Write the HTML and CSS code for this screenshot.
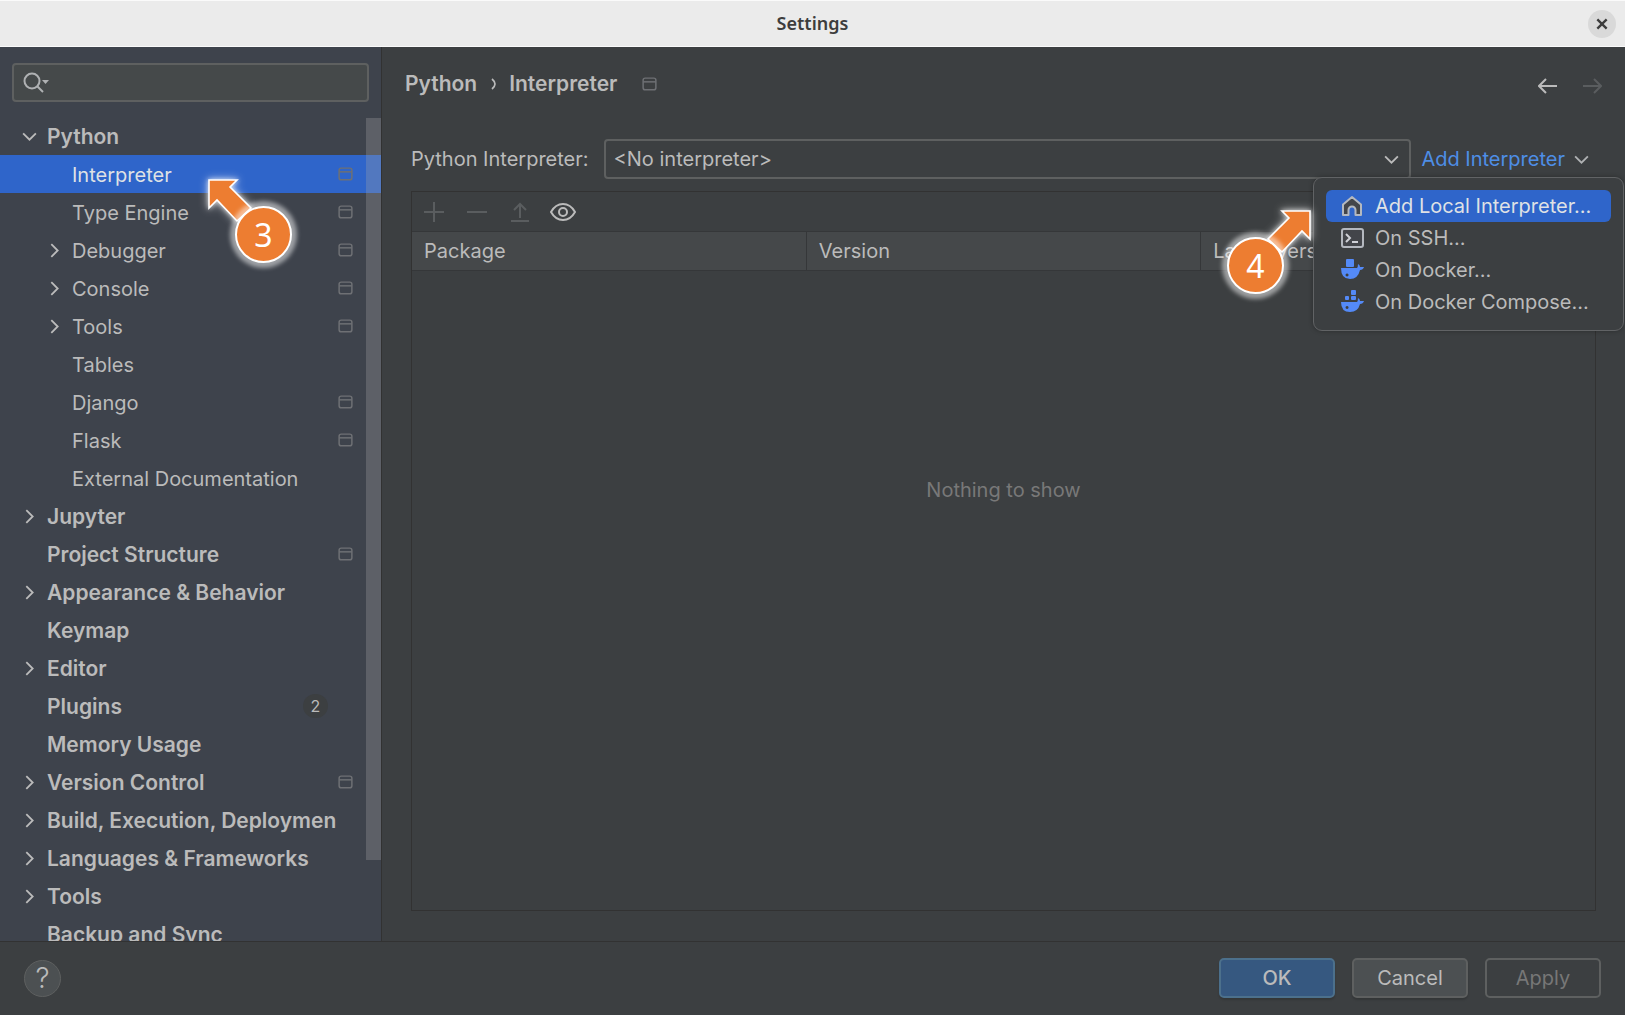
FILE: index.html
```
<!DOCTYPE html>
<html lang="en">
  <head>
    <meta charset="UTF-8" />
    <meta name="viewport" content="width=device-width, initial-scale=1.0" />
    <title>Settings</title>
    <link rel="stylesheet" href="styles.css">
  </head>
  <body>
    <svg class="sprite" aria-hidden="true">
      <symbol id="chevron-right" viewBox="0 0 16 16"><path d="M5 2l6 6-6 6" fill="none" stroke="currentColor" stroke-width="1.7" /></symbol>
      <symbol id="chevron-down" viewBox="0 0 16 16"><path d="M2 5l6 6 6-6" fill="none" stroke="currentColor" stroke-width="1.7" /></symbol>
      <symbol id="project" viewBox="0 0 16 16">
        <rect x="2" y="2" width="12" height="11" rx="2" fill="none" stroke="currentColor" stroke-width="1.4" />
        <path d="M2 5.5h12" stroke="currentColor" stroke-width="1.4" />
      </symbol>
      <symbol id="arrow-callout" viewBox="0 0 48 48"><path d="M3 3h28l-7 7 21 21-14 13-20-21-8 8z" fill="#ed7d31" stroke="#fff" stroke-width="1.6" /></symbol>
    </svg>

    <header class="titlebar">
      <h1>Settings</h1>
      <button class="close" type="button" aria-label="Close">
        <svg viewBox="0 0 12 12" width="14" height="14"><path d="M2 2l8 8M10 2l-8 8" stroke="#3d3d3d" stroke-width="2" /></svg>
      </button>
    </header>

    <div class="content">
      <aside class="sidebar">
        <div class="search">
          <svg viewBox="0 0 28 22" width="28" height="22">
            <circle cx="9" cy="9" r="7.5" fill="none" stroke="#afb1b3" stroke-width="2" />
            <path d="M14 14l6 6" stroke="#afb1b3" stroke-width="2" />
            <path d="M19 8h7l-3.500 4z" fill="#afb1b3" />
          </svg>
          <input type="text" aria-label="Search settings" />
        </div>
        <nav class="tree-wrap">
          <ul class="tree">
            <li class="group"><svg class="toggle"><use href="#chevron-down" /></svg><a href="#">Python</a></li>
            <li class="child selected"><a href="#">Interpreter</a><svg class="mark"><use href="#project" /></svg></li>
            <li class="child"><a href="#">Type Engine</a><svg class="mark"><use href="#project" /></svg></li>
            <li class="child"><svg class="toggle"><use href="#chevron-right" /></svg><a href="#">Debugger</a><svg class="mark"><use href="#project" /></svg></li>
            <li class="child"><svg class="toggle"><use href="#chevron-right" /></svg><a href="#">Console</a><svg class="mark"><use href="#project" /></svg></li>
            <li class="child"><svg class="toggle"><use href="#chevron-right" /></svg><a href="#">Tools</a><svg class="mark"><use href="#project" /></svg></li>
            <li class="child"><a href="#">Tables</a></li>
            <li class="child"><a href="#">Django</a><svg class="mark"><use href="#project" /></svg></li>
            <li class="child"><a href="#">Flask</a><svg class="mark"><use href="#project" /></svg></li>
            <li class="child"><a href="#">External Documentation</a></li>
            <li class="group"><svg class="toggle"><use href="#chevron-right" /></svg><a href="#">Jupyter</a></li>
            <li class="group"><a href="#">Project Structure</a><svg class="mark"><use href="#project" /></svg></li>
            <li class="group"><svg class="toggle"><use href="#chevron-right" /></svg><a href="#">Appearance &amp; Behavior</a></li>
            <li class="group"><a href="#">Keymap</a></li>
            <li class="group"><svg class="toggle"><use href="#chevron-right" /></svg><a href="#">Editor</a></li>
            <li class="group"><a href="#">Plugins</a><span class="count">2</span></li>
            <li class="group"><a href="#">Memory Usage</a></li>
            <li class="group"><svg class="toggle"><use href="#chevron-right" /></svg><a href="#">Version Control</a><svg class="mark"><use href="#project" /></svg></li>
            <li class="group"><svg class="toggle"><use href="#chevron-right" /></svg><a href="#">Build, Execution, Deploymen</a></li>
            <li class="group"><svg class="toggle"><use href="#chevron-right" /></svg><a href="#">Languages &amp; Frameworks</a></li>
            <li class="group"><svg class="toggle"><use href="#chevron-right" /></svg><a href="#">Tools</a></li>
            <li class="group"><a href="#">Backup and Sync</a></li>
          </ul>
          <div class="scrollbar"></div>
          <div class="callout callout-3">
            <svg class="arrow" width="48" height="48"><use href="#arrow-callout" /></svg>
            <span>3</span>
          </div>
        </nav>
      </aside>

      <main class="page">
        <div class="page-head">
          <h2>Python</h2>
          <svg class="crumb" viewBox="0 0 6 12"><path d="M1 1q6 5 0 10" fill="none" stroke="currentColor" stroke-width="1.7" /></svg>
          <h2>Interpreter</h2>
          <svg class="mark"><use href="#project" /></svg>
          <div class="history">
            <button type="button" aria-label="Back"><svg viewBox="0 0 20 16" width="20" height="16"><path d="M19 8H2M8 1L1 8l7 7" fill="none" stroke="currentColor" stroke-width="2" /></svg></button>
            <button type="button" aria-label="Forward" disabled><svg viewBox="0 0 20 16" width="20" height="16"><path d="M1 8h17M12 1l7 7-7 7" fill="none" stroke="currentColor" stroke-width="2" /></svg></button>
          </div>
        </div>

        <div class="interpreter-row">
          <label for="interpreter">Python Interpreter:</label>
          <div class="select">
            <select id="interpreter"><option>&lt;No interpreter&gt;</option></select>
            <svg><use href="#chevron-down" /></svg>
          </div>
          <div class="add">
            <button class="add-button" type="button">Add Interpreter <svg><use href="#chevron-down" /></svg></button>
            <div class="menu">
              <button class="active" type="button">
                <svg viewBox="0 0 24 24"><path d="M3 10.500l9-7.500 9 7.500V21h-5.500v-5a3.500 3.500 0 0 0-7 0v5H3z" fill="#43454a" stroke="#b4b8bf" stroke-width="2" stroke-linejoin="round" /></svg>
                Add Local Interpreter...
              </button>
              <button type="button">
                <svg viewBox="0 0 24 24"><rect x="2" y="3" width="21" height="18" rx="2" fill="#43454a" stroke="#b4b8bf" stroke-width="2" /><path d="M6 8l4 4-4 4M12 16h6" fill="none" stroke="#ced0d6" stroke-width="2" /></svg>
                On SSH...
              </button>
              <button type="button">
                <svg viewBox="0 0 24 24" fill="#548af7"><rect x="6" y="1" width="8" height="8" rx="1" /><path fill-rule="evenodd" d="M1 10h16q1-1 1-4 2 1 2 3h4q-1 3-4 3-2 9-10 9-9 0-9-11zM7 15.500a1.500 1.500 0 1 0 .1 0z" /></svg>
                On Docker...
              </button>
              <button type="button">
                <svg viewBox="0 0 24 24" fill="#548af7"><rect x="11" y="0" width="5" height="5" rx="1" /><rect x="5" y="6" width="4" height="4" rx="1" /><rect x="11" y="6" width="5" height="4" rx="1" /><path fill-rule="evenodd" d="M1 12h16q1-1 1-4 2 1 2 3h4q-1 3-4 3-2 8-10 8-9 0-9-10zM7 16a1.500 1.500 0 1 0 .1 0z" /></svg>
                On Docker Compose...
              </button>
              <div class="callout callout-4">
                <svg class="arrow" width="48" height="48"><use href="#arrow-callout" /></svg>
                <span>4</span>
              </div>
            </div>
          </div>
        </div>

        <section class="packages">
          <div class="toolbar">
            <button type="button" aria-label="Install" disabled><svg viewBox="0 0 26 26"><path d="M13 3v20M3 13h20" stroke="currentColor" stroke-width="2" /></svg></button>
            <button type="button" aria-label="Uninstall" disabled><svg viewBox="0 0 26 26"><path d="M3 13h20" stroke="currentColor" stroke-width="2" /></svg></button>
            <button type="button" aria-label="Upgrade" disabled><svg viewBox="0 0 26 26"><path d="M13 19V5M7 11l6-6 6 6M4 22h18" fill="none" stroke="currentColor" stroke-width="2" /></svg></button>
            <button type="button" aria-label="Show early releases"><svg viewBox="0 0 26 26"><path d="M1 13q4.500-8 12-8t12 8q-4.500 8-12 8T1 13z" fill="none" stroke="currentColor" stroke-width="2" /><circle cx="13" cy="13" r="4" fill="none" stroke="currentColor" stroke-width="2" /></svg></button>
          </div>
          <table>
            <thead>
              <tr>
                <th>Package</th>
                <th>Version</th>
                <th>Latest version</th>
              </tr>
            </thead>
            <tbody>
              <tr>
                <td colspan="3">Nothing to show</td>
              </tr>
            </tbody>
          </table>
        </section>
      </main>
    </div>

    <footer class="footer">
      <button class="help" type="button" aria-label="Help">?</button>
      <button class="btn primary" type="button">OK</button>
      <button class="btn" type="button">Cancel</button>
      <button class="btn" type="button" disabled>Apply</button>
    </footer>
  </body>
</html>
```

FILE: styles.css
```
* {
  box-sizing: border-box;
}

body {
  margin: 0;
  height: 100vh;
  display: flex;
  flex-direction: column;
  overflow: hidden;
  background-color: #3c3f41;
  color: #bbbbbb;
  font-family: Inter, sans-serif;
  font-size: 20px;
  line-height: 28px;
}

button,
input,
select {
  font: inherit;
  color: inherit;
}

button {
  padding: 0;
  border: none;
  background: none;
}

a {
  color: inherit;
  text-decoration: none;
}

.sprite {
  display: none;
}

/* title bar */
.titlebar {
  display: grid;
  grid-template-columns: 1fr auto 1fr;
  align-items: center;
  flex: none;
  height: 47px;
  padding: 0 9px;
  background-color: #ebebeb;
  border-top: 1px solid #fafafa;
  border-bottom: 1px solid #fafafa;
}

.titlebar h1 {
  grid-column: 2;
  margin: 0;
  padding-bottom: 2px;
  font-family: "Noto Sans", sans-serif;
  font-size: 18px;
  font-weight: 600;
  color: #3d3d3d;
}

.close {
  display: flex;
  align-items: center;
  justify-content: center;
  justify-self: end;
  width: 28px;
  height: 28px;
  border-radius: 50%;
  background-color: #d9d9d9;
}

.content {
  display: flex;
  flex: 1;
  min-height: 0;
}

/* sidebar */
.sidebar {
  display: flex;
  flex-direction: column;
  flex: none;
  width: 382px;
  padding-top: 16px;
  background-color: #3e434c;
  border-right: 1px solid #323232;
}

.search {
  display: flex;
  align-items: center;
  flex: none;
  height: 39px;
  margin: 0 12px;
  padding-left: 9px;
  background-color: #45494a;
  border: 2px solid #5e6060;
  border-radius: 4px;
}

.search input {
  flex: 1;
  min-width: 0;
  border: none;
  outline: none;
  background: none;
}

.tree-wrap {
  position: relative;
  flex: 1;
  min-height: 0;
  margin-top: 15px;
}

.tree {
  height: 100%;
  margin: 0;
  padding: 0;
  overflow: hidden;
  list-style: none;
}

.tree li {
  display: flex;
  align-items: center;
  height: 38px;
  padding-right: 27px;
  white-space: nowrap;
}

.tree li::before {
  content: "";
  order: -2;
  width: 21px;
}

.tree .child::before {
  width: 46px;
}

.tree a {
  flex: 1;
  padding-top: 1px;
}

.tree a:first-child {
  margin-left: 26px;
}

.group a {
  font-size: 21px;
  font-weight: 600;
}

.toggle {
  width: 17px;
  height: 17px;
  margin-right: 9px;
}

.mark {
  width: 17px;
  height: 17px;
  color: #6e7074;
}

.tree .selected {
  background-color: #2f65ca;
  color: #dfe1e5;
}

.count {
  width: 25px;
  margin-right: 26px;
  border-radius: 12px;
  background-color: #3c3f41;
  font-size: 16px;
  line-height: 24px;
  text-align: center;
}

.scrollbar {
  position: absolute;
  top: 1px;
  right: 0;
  width: 15px;
  height: 90%;
  background-color: rgba(166, 166, 166, 0.3);
}

/* page */
.page {
  display: flex;
  flex-direction: column;
  flex: 1;
  min-width: 0;
  padding: 22px 29px 30px;
}

.page-head {
  display: flex;
  align-items: center;
  height: 30px;
  margin-left: -6px;
  margin-right: -6px;
}

.page-head h2 {
  margin: 0;
  font-size: 21px;
  font-weight: 600;
}

.page-head .mark {
  margin-left: 24px;
}

.crumb {
  width: 6px;
  height: 12px;
  margin: 0 12px 0 14px;
}

.history {
  display: flex;
  gap: 24px;
  margin-left: auto;
  padding-top: 4px;
}

.history button {
  display: flex;
}

.history button:disabled,
.toolbar button:disabled {
  color: #5a5d5f;
}

.interpreter-row {
  display: flex;
  align-items: center;
  height: 40px;
  margin-top: 40px;
}

.select {
  position: relative;
  flex: 1;
  margin-left: 15px;
}

.select select {
  display: block;
  width: 100%;
  height: 40px;
  padding: 0 8px;
  appearance: none;
  background-color: #3c3f41;
  border: 2px solid #5e6060;
  border-radius: 4px;
}

.select svg {
  position: absolute;
  top: 12px;
  right: 11px;
  width: 17px;
  height: 17px;
  pointer-events: none;
}

.add {
  position: relative;
  margin-left: 10px;
}

.add-button {
  display: flex;
  align-items: center;
  gap: 8px;
  margin-right: 6px;
  color: #4e8ee6;
}

.add-button svg {
  width: 17px;
  height: 17px;
  color: #afb1b3;
}

/* dropdown menu */
.menu {
  position: absolute;
  z-index: 2;
  top: 32px;
  right: -28px;
  width: 311px;
  padding: 12px;
  background-color: #3c3f41;
  border: 1px solid #616365;
  border-radius: 9px;
  box-shadow: 0 0 5px rgba(0, 0, 0, 0.3);
}

.menu button {
  display: flex;
  align-items: center;
  gap: 11px;
  width: 100%;
  height: 32px;
  padding-left: 14px;
  border-radius: 6px;
  white-space: nowrap;
}

.menu button svg {
  flex: none;
  width: 24px;
  height: 24px;
}

.menu .active {
  background-color: #2f65ca;
  color: #dfe1e5;
}

/* packages */
.packages {
  display: flex;
  flex-direction: column;
  flex: 1;
  margin-top: 12px;
  border: 1px solid #323232;
}

.toolbar {
  display: flex;
  align-items: center;
  gap: 17px;
  height: 39px;
  padding: 0 9px;
}

.toolbar button,
.toolbar svg {
  display: block;
  width: 26px;
  height: 26px;
}

.packages table {
  width: 100%;
  border-collapse: collapse;
  table-layout: fixed;
}

.packages th {
  height: 39px;
  padding: 0 12px;
  border: 1px solid #353739;
  border-left: none;
  background-color: #45484a;
  font-weight: 400;
  text-align: left;
}

.packages th:last-child {
  border-right: none;
}

.packages td {
  padding: 205px 0 0;
  color: #787878;
  text-align: center;
}

/* numbered callouts */
.callout {
  position: absolute;
  z-index: 3;
  width: 86px;
  height: 86px;
}

.callout .arrow {
  position: absolute;
  overflow: visible;
  filter: drop-shadow(0 0 2px rgba(255, 255, 255, 0.6)) drop-shadow(0 0 4px rgba(255, 255, 255, 0.6));
}

.callout span {
  position: absolute;
  bottom: 0;
  width: 57px;
  height: 57px;
  border: 2px solid #fff;
  border-radius: 50%;
  background-color: #ed7d31;
  box-shadow: 0 0 4px 5px rgba(255, 255, 255, 0.5);
  color: #fff;
  font-family: "Noto Sans", sans-serif;
  font-size: 32px;
  line-height: 53px;
  text-align: center;
}

.callout-3 {
  top: 60px;
  left: 206px;
}

.callout-3 span {
  right: 0;
}

.callout-4 {
  top: 30px;
  left: -87px;
}

.callout-4 .arrow {
  right: 0;
  transform: scaleX(-1);
}

/* footer */
.footer {
  display: flex;
  align-items: center;
  gap: 17px;
  flex: none;
  height: 74px;
  padding: 0 24px 1px;
  border-top: 1px solid #323232;
}

.help {
  width: 37px;
  height: 37px;
  margin-right: auto;
  border: 1px solid #5e6060;
  border-radius: 50%;
  background-color: #4c5052;
  font-size: 28px;
  font-weight: 300;
}

.btn {
  width: 116px;
  height: 40px;
  border: 2px solid #5e6060;
  border-radius: 5px;
  background-color: #4c5052;
  box-shadow: 0 2px 2px rgba(0, 0, 0, 0.15);
}

.btn.primary {
  border-color: #4c708c;
  background-color: #365880;
  font-weight: 500;
}

.btn:disabled {
  background: none;
  box-shadow: none;
  color: #777777;
}
```
